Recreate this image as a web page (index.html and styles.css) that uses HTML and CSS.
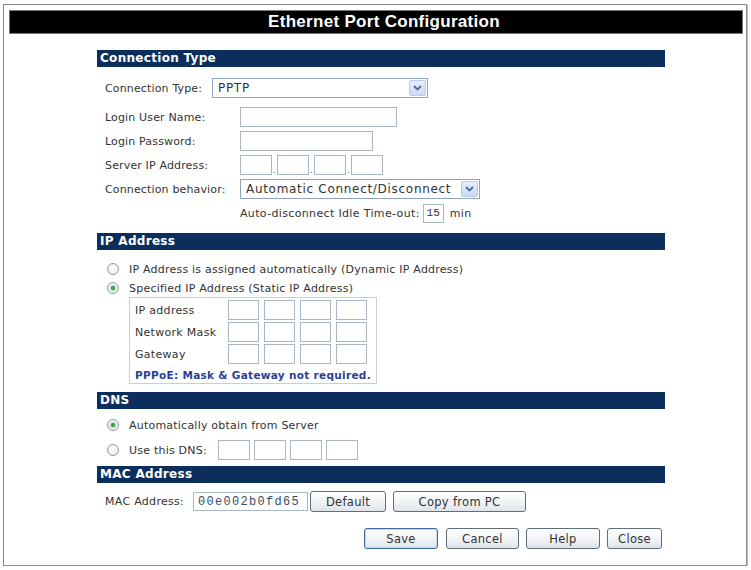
FILE: index.html
```html
<!DOCTYPE html>
<html>
<head>
<meta charset="utf-8">
<link rel="stylesheet" href="styles.css">
</head>
<body>
<div class="frame">
  <div class="titlebar">Ethernet Port Configuration</div>
  <div class="content">
    <div class="bar">Connection Type</div>
    <div class="body conn">
      <div class="row first">
        <span class="lbl lbl-type">Connection Type:</span>
        <div class="select sel-type"><span class="sel-text">PPTP</span><span class="arrow"><svg width="9" height="6" viewBox="0 0 9 6"><path d="M1 1 L4.5 4.5 L8 1" fill="none" stroke="#4a6ea8" stroke-width="1.8"/></svg></span></div>
      </div>
      <div class="row">
        <span class="lbl lbl-w">Login User Name:</span>
        <input class="inp in-user" type="text">
      </div>
      <div class="row">
        <span class="lbl lbl-w">Login Password:</span>
        <input class="inp in-pass" type="text">
      </div>
      <div class="row">
        <span class="lbl lbl-w">Server IP Address:</span>
        <div class="ipset">
          <input class="inp ip" type="text"><span class="dot">.</span><input class="inp ip" type="text"><span class="dot">.</span><input class="inp ip" type="text"><span class="dot">.</span><input class="inp ip" type="text">
        </div>
      </div>
      <div class="row">
        <span class="lbl lbl-w">Connection behavior:</span>
        <div class="select sel-beh"><span class="sel-text">Automatic Connect/Disconnect</span><span class="arrow"><svg width="9" height="6" viewBox="0 0 9 6"><path d="M1 1 L4.5 4.5 L8 1" fill="none" stroke="#4a6ea8" stroke-width="1.8"/></svg></span></div>
      </div>
      <div class="row timeout">
        <span class="lbl">Auto-disconnect Idle Time-out:</span>
        <input class="inp in-time" type="text" value="15">
        <span class="lbl unit">min</span>
      </div>
    </div>

    <div class="bar">IP Address</div>
    <div class="body ipsec">
      <div class="row radio-row">
        <span class="radio"></span>
        <span class="lbl">IP Address is assigned automatically (Dynamic IP Address)</span>
      </div>
      <div class="row radio-row r2">
        <span class="radio on"></span>
        <span class="lbl">Specified IP Address (Static IP Address)</span>
      </div>
      <div class="staticbox">
        <div class="srow">
          <span class="lbl slbl">IP address</span>
          <div class="ipset gap"><input class="inp ip2" type="text"><input class="inp ip2" type="text"><input class="inp ip2" type="text"><input class="inp ip2" type="text"></div>
        </div>
        <div class="srow">
          <span class="lbl slbl">Network Mask</span>
          <div class="ipset gap"><input class="inp ip2" type="text"><input class="inp ip2" type="text"><input class="inp ip2" type="text"><input class="inp ip2" type="text"></div>
        </div>
        <div class="srow">
          <span class="lbl slbl">Gateway</span>
          <div class="ipset gap"><input class="inp ip2" type="text"><input class="inp ip2" type="text"><input class="inp ip2" type="text"><input class="inp ip2" type="text"></div>
        </div>
        <div class="note">PPPoE: Mask &amp; Gateway not required.</div>
      </div>
    </div>

    <div class="bar">DNS</div>
    <div class="body dns">
      <div class="row radio-row">
        <span class="radio on"></span>
        <span class="lbl">Automatically obtain from Server</span>
      </div>
      <div class="row radio-row">
        <span class="radio"></span>
        <span class="lbl lbl-dns">Use this DNS:</span>
        <div class="ipset gap4"><input class="inp ip" type="text"><input class="inp ip" type="text"><input class="inp ip" type="text"><input class="inp ip" type="text"></div>
      </div>
    </div>

    <div class="bar">MAC Address</div>
    <div class="body mac">
      <div class="row macrow">
        <span class="lbl lbl-mac">MAC Address:</span>
        <input class="inp in-mac" type="text" value="00e002b0fd65">
        <button class="btn b-default">Default</button>
        <button class="btn b-copy">Copy from PC</button>
      </div>
      <div class="actions">
        <button class="btn b-save">Save</button>
        <button class="btn b-cancel">Cancel</button>
        <button class="btn b-help">Help</button>
        <button class="btn b-close">Close</button>
      </div>
    </div>
  </div>
</div>
</body>
</html>
```

FILE: styles.css
```css
html, body {
  margin: 0;
  padding: 0;
  background: #fff;
}
body {
  font-family: "DejaVu Sans", Verdana, sans-serif;
  font-size: 11px;
  color: #333;
}
.frame {
  box-sizing: border-box;
  margin: 4px 0 0 3px;
  width: 744px;
  height: 562px;
  border: 1px solid #8a8a8a;
  box-shadow: 1px 1px 0 #bbb;
  padding: 6px 4px 0 6px;
}
.titlebar {
  height: 22px;
  background: #000;
  color: #fff;
  text-align: center;
  font-family: "Liberation Sans", Arial, sans-serif;
  font-weight: bold;
  font-size: 17px;
  letter-spacing: 0.3px;
  line-height: 22px;
  padding-left: 16px;
  box-shadow: 0 0 0 1px #777;
}
.content {
  margin: 17px 0 0 87px;
  width: 568px;
}
.bar {
  height: 17px;
  background: #0c2e5c;
  color: #fff;
  font-weight: bold;
  font-size: 12px;
  letter-spacing: 0.3px;
  line-height: 17px;
  padding-left: 3px;
}
.body {
  display: flex;
  flex-direction: column;
}
.row {
  display: flex;
  align-items: center;
  height: 20px;
}
.lbl {
  white-space: nowrap;
  letter-spacing: 0.15px;
}
.conn {
  padding: 11px 0 10px 8px;
  gap: 4px;
}
.conn .first {
  margin-bottom: 5px;
}
.lbl-type { width: 107px; }
.lbl-w { width: 135px; }
.select {
  box-sizing: border-box;
  height: 20px;
  border: 1px solid #8ea5c0;
  display: flex;
  align-items: center;
  justify-content: space-between;
  padding: 1px 1px 1px 5px;
  background: #fff;
}
.sel-type { width: 216px; }
.sel-beh { width: 240px; }
.sel-text {
  font-size: 12px;
  color: #333;
  letter-spacing: 0.7px;
}
.arrow {
  width: 17px;
  height: 16px;
  box-sizing: border-box;
  background: linear-gradient(#e6eefa, #c9daf2);
  border: 1px solid #b9cbe6;
  border-radius: 2px;
  display: flex;
  align-items: center;
  justify-content: center;
}
.inp {
  box-sizing: border-box;
  height: 20px;
  border: 1px solid #a9b6c6;
  margin: 0;
  padding: 0 2px;
  background: #fff;
  font-family: "DejaVu Sans", sans-serif;
  font-size: 11px;
  color: #333;
  outline: none;
}
.in-user { width: 157px; }
.in-pass { width: 133px; }
.ipset {
  display: flex;
  align-items: center;
}
.ip { width: 32px; }
.dot {
  width: 5px;
  text-align: center;
  align-self: flex-end;
  font-size: 9px;
  line-height: 10px;
  color: #666;
}
.timeout {
  padding-left: 135px;
}
.timeout .lbl { letter-spacing: 0.35px; }
.in-time {
  width: 21px;
  height: 19px;
  margin-left: 3px;
  font-family: "Liberation Mono", monospace;
  padding: 0 1px;
  text-align: center;
  font-size: 11px;
}
.unit { margin-left: 6px; }

.ipsec {
  padding: 9px 0 8px 10px;
}
.radio-row .lbl { letter-spacing: 0.22px; }
.r2 { height: 18px; }
.radio {
  box-sizing: border-box;
  width: 12px;
  height: 12px;
  border-radius: 50%;
  border: 1px solid #8d9aab;
  background: radial-gradient(circle at 50% 40%, #fff, #e4e8ec);
  margin-right: 10px;
  flex: none;
  display: flex;
  align-items: center;
  justify-content: center;
}
.radio.on::after {
  content: "";
  width: 4px;
  height: 4px;
  border-radius: 50%;
  background: #3f9f43;
  box-shadow: 0 0 0 1px #a9d8aa;
}
.staticbox {
  box-sizing: border-box;
  margin-left: 22px;
  width: 248px;
  height: 87px;
  border: 1px solid #c9ced4;
  padding: 2px 0 0 5px;
  display: flex;
  flex-direction: column;
  gap: 2px;
}
.srow {
  display: flex;
  align-items: center;
  height: 20px;
}
.slbl {
  width: 93px;
  letter-spacing: 0.3px;
}
.gap { gap: 5px; }
.gap4 { gap: 4px; }
.ip2 { width: 31px; }
.note {
  height: 19px;
  line-height: 19px;
  font-weight: bold;
  color: #2a3f95;
  font-size: 10.5px;
  letter-spacing: 0.3px;
}

.dns {
  padding: 6px 0 6px 10px;
  gap: 5px;
}
.lbl-dns { width: 89px; }

.mac {
  padding: 8px 3px 0 8px;
}
.macrow {
  height: 21px;
}
.lbl-mac { width: 88px; letter-spacing: 0.3px; }
.in-mac {
  width: 115px;
  height: 19px;
  font-family: "Liberation Mono", monospace;
  font-size: 12px;
  letter-spacing: 1.3px;
  color: #3b4a66;
  padding-left: 4px;
}
.btn {
  box-sizing: border-box;
  height: 21px;
  border: 1px solid #5f6d7c;
  border-radius: 3px;
  background: linear-gradient(#ffffff, #eef1f5 60%, #dfe4ea);
  font-family: "DejaVu Sans", sans-serif;
  font-size: 11.5px;
  color: #333;
  padding: 0;
  margin: 0;
  letter-spacing: 0.3px;
}
.b-default { width: 76px; margin-left: 2px; }
.b-copy { width: 133px; margin-left: 7px; }
.actions {
  display: flex;
  justify-content: flex-end;
  gap: 7px;
  margin-top: 16px;
}
.b-save { width: 74px; border-color: #3f6b9e; box-shadow: inset 0 0 0 1px #c5d6ea; margin-right: 1px; }
.b-cancel { width: 73px; }
.b-help { width: 74px; }
.b-close { width: 55px; }
```
